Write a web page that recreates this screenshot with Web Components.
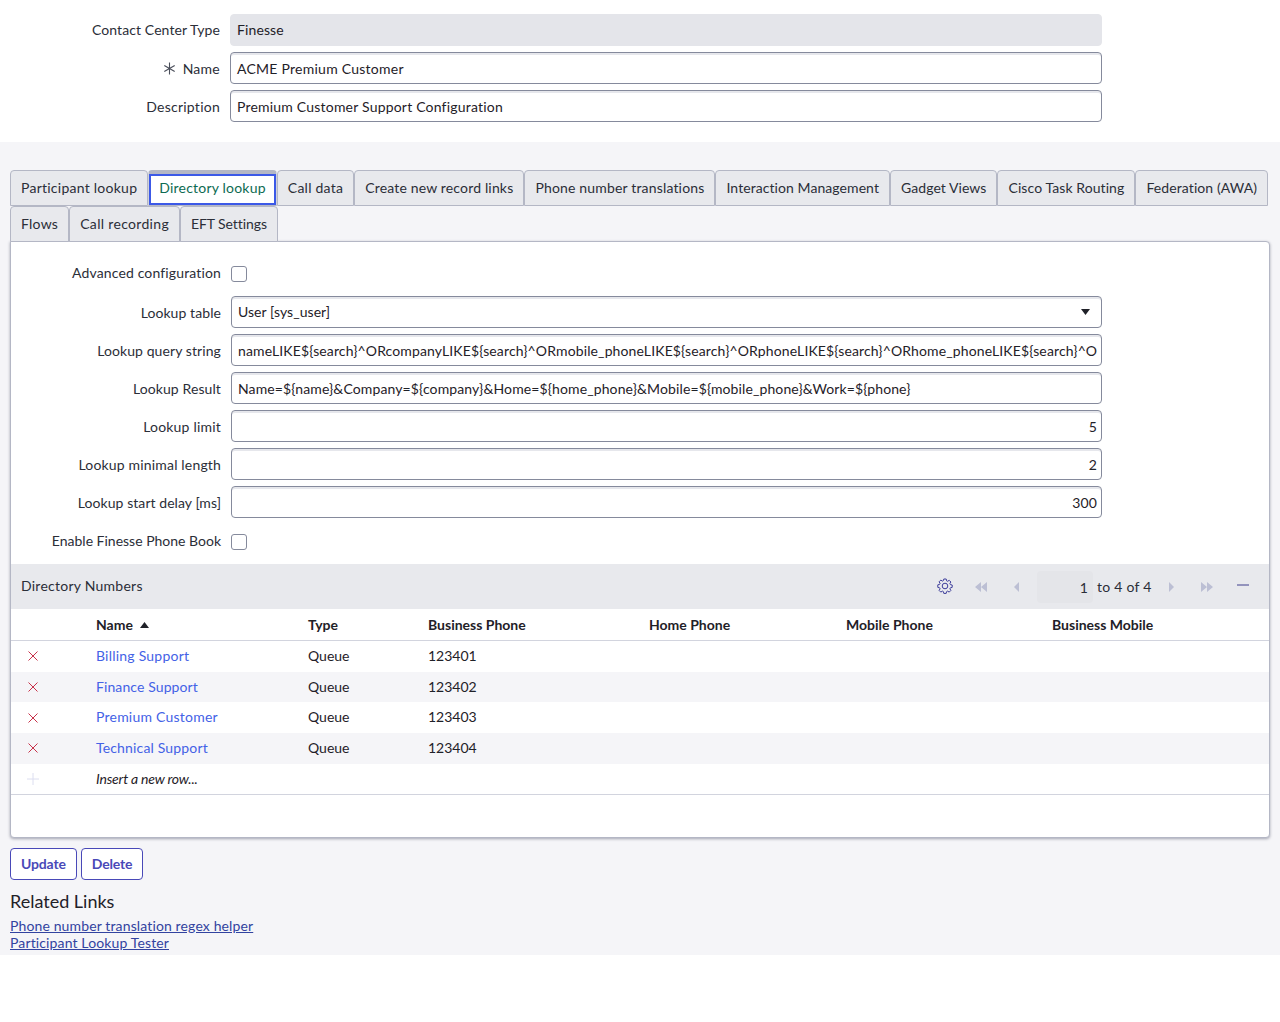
<!DOCTYPE html>
<html>
<head>
<meta charset="utf-8">
<title>Contact Center Configuration</title>
<style>
    html, body {
        margin: 0;
        background-color: white;
        font-family: Lato, "Liberation Sans", sans-serif;
        font-size: 14px;
        color: #1f2128;
    }
</style>
</head>
<body>
<cfg-page>
    <cfg-header>
        <cfg-field label="Contact Center Type" value="Finesse" readonly style="--label-ls:.09px;--value-ls:.12px;--label-top:0;--label-bottom:1px"></cfg-field>
        <cfg-field label="Name" value="ACME Premium Customer" required style="--label-ls:.25px;--value-ls:.25px"></cfg-field>
        <cfg-field label="Description" value="Premium Customer Support Configuration" style="--label-ls:.25px;--value-ls:.2px"></cfg-field>
    </cfg-header>
    <cfg-tabs>
        <cfg-tab>Participant lookup</cfg-tab><cfg-tab selected style="letter-spacing:.21px">Directory lookup</cfg-tab><cfg-tab>Call data</cfg-tab><cfg-tab style="letter-spacing:.165px">Create new record links</cfg-tab><cfg-tab style="letter-spacing:.17px">Phone number translations</cfg-tab><cfg-tab style="letter-spacing:.07px">Interaction Management</cfg-tab><cfg-tab style="letter-spacing:.06px">Gadget Views</cfg-tab><cfg-tab style="letter-spacing:.085px">Cisco Task Routing</cfg-tab><cfg-tab style="letter-spacing:.1px">Federation (AWA)</cfg-tab><cfg-tab>Flows</cfg-tab><cfg-tab style="letter-spacing:.32px">Call recording</cfg-tab><cfg-tab style="letter-spacing:-.08px">EFT Settings</cfg-tab>
    </cfg-tabs>
    <cfg-panel>
        <cfg-field inset label="Advanced configuration" type="checkbox" style="--label-ls:.14px;--label-top:0;--label-bottom:3px"></cfg-field>
        <cfg-field inset label="Lookup table" value="User [sys_user]" type="select" style="--label-ls:.08px;--value-ls:.05px;--value-top:0;--value-bottom:1px"></cfg-field>
        <cfg-field inset label="Lookup query string" value="nameLIKE${search}^ORcompanyLIKE${search}^ORmobile_phoneLIKE${search}^ORphoneLIKE${search}^ORhome_phoneLIKE${search}^O" style="--label-ls:.09px;--value-ls:.125px"></cfg-field>
        <cfg-field inset label="Lookup Result" value="Name=${name}&amp;Company=${company}&amp;Home=${home_phone}&amp;Mobile=${mobile_phone}&amp;Work=${phone}" style="--label-ls:.1px;--value-ls:.115px"></cfg-field>
        <cfg-field inset label="Lookup limit" value="5" type="number" style="--label-ls:.2px"></cfg-field>
        <cfg-field inset label="Lookup minimal length" value="2" type="number" style="--label-ls:.17px"></cfg-field>
        <cfg-field inset label="Lookup start delay [ms]" value="300" type="number" style="--label-ls:.06px"></cfg-field>
        <cfg-field inset label="Enable Finesse Phone Book" type="checkbox" style="--label-ls:0;--check-top:4px"></cfg-field>
        <cfg-list title="Directory Numbers">
            <cfg-list-row name="Billing Support" phone="123401"></cfg-list-row>
            <cfg-list-row name="Finance Support" phone="123402" striped style="--link-ls:.1px"></cfg-list-row>
            <cfg-list-row name="Premium Customer" phone="123403"></cfg-list-row>
            <cfg-list-row name="Technical Support" phone="123404" striped style="--link-ls:.16px"></cfg-list-row>
        </cfg-list>
    </cfg-panel>
    <cfg-actions>
        <cfg-button>Update</cfg-button>
        <cfg-button>Delete</cfg-button>
    </cfg-actions>
    <cfg-related>
        <a href="#">Phone number translation regex helper</a>
        <a href="#">Participant Lookup Tester</a>
    </cfg-related>
</cfg-page>

<script>
function defineSimple(name, css, html) {
    customElements.define(name, class extends HTMLElement {
        constructor() {
            super();
            this.attachShadow({ mode: 'open' });
            this.shadowRoot.innerHTML = `<style>${css}</style>${html}`;
        }
    });
}

defineSimple('cfg-page', `
    :host {
        display: block;
        height: 955px;
        background-color: #f5f5f8;
    }
`, `<slot></slot>`);

defineSimple('cfg-header', `
    :host {
        display: flex;
        flex-direction: column;
        gap: 6px;
        height: 142px;
        box-sizing: border-box;
        padding-top: 14px;
        background-color: white;
    }
`, `<slot></slot>`);

defineSimple('cfg-tabs', `
    :host {
        display: flex;
        flex-wrap: wrap;
        padding: 28px 0 0 10px;
        margin-bottom: -1px;
        position: relative;
        z-index: 1;
    }
`, `<slot></slot>`);

class CfgTab extends HTMLElement {
    constructor() {
        super();
        this.attachShadow({ mode: 'open' });
        this.shadowRoot.innerHTML = `
            <style>
                :host {
                    display: block;
                    height: 36px;
                    box-sizing: border-box;
                    padding: 0 10px;
                    line-height: 34px;
                    background-color: #e8e9ed;
                    color: #2b2e38;
                    border: 1px solid #b4b7c5;
                    border-radius: 4px 4px 0 0;
                    white-space: nowrap;
                    letter-spacing: .25px;
                }
                :host([selected]) {
                    background-color: white;
                    color: #0d6b52;
                    border-top-width: 4px;
                    border-left-color: #d0d2db;
                    border-right-color: #d0d2db;
                    line-height: 28px;
                    box-shadow: inset 0 0 0 2px #3c59e7;
                }
            </style>
            <slot></slot>`;
    }
}
customElements.define('cfg-tab', CfgTab);

defineSimple('cfg-panel', `
    :host {
        display: flex;
        flex-direction: column;
        gap: 6px;
        margin: 0 10px;
        height: 597px;
        box-sizing: border-box;
        padding-top: 16px;
        background-color: white;
        border: 1px solid #b4b7c5;
        border-radius: 0 4px 4px 4px;
        box-shadow: 0 1px 3px rgba(40, 45, 70, 0.4);
    }
`, `<slot></slot>`);

class CfgField extends HTMLElement {
    connectedCallback() {
        const type = this.getAttribute('type') || 'text';
        const value = this.getAttribute('value') || '';
        const isCheck = type === 'checkbox';
        const star = this.hasAttribute('required')
            ? `<svg class="star" width="13" height="13" viewBox="0 0 13 13"><path d="M6.5 0.5v12M1.3 3.5l10.4 6M1.3 9.5l10.4-6" stroke="#4a4e5a" stroke-width="1.1" fill="none"/></svg>`
            : '';
        const arrow = type === 'select'
            ? `<svg class="arrow" width="9" height="6" viewBox="0 0 9 6"><path d="M0 0h9L4.500 6z" fill="#1f2128"/></svg>`
            : '';
        const control = isCheck
            ? `<div class="check"></div>`
            : `<div class="box ${type}"><span></span>${arrow}</div>`;
        this.attachShadow({ mode: 'open' });
        this.shadowRoot.innerHTML = `
            <style>
                :host {
                    display: grid;
                    grid-template-columns: 220px 872px;
                    column-gap: 10px;
                    align-items: center;
                    height: 32px;
                    color: #2b2e38;
                }
                :host([inset]) { grid-template-columns: 210px 871px; }
                .label {
                    display: flex;
                    justify-content: flex-end;
                    align-items: center;
                    gap: 7px;
                    white-space: nowrap;
                    padding-top: var(--label-top, 1px);
                    padding-bottom: var(--label-bottom, 0);
                    letter-spacing: var(--label-ls, .1px);
                }
                .box {
                    height: 32px;
                    box-sizing: border-box;
                    display: flex;
                    align-items: center;
                    justify-content: space-between;
                    padding: 0 4px 0 6px;
                    background-color: white;
                    color: #1f2128;
                    border: 1px solid #858a9c;
                    border-radius: 4px;
                    box-shadow: inset 0 2px 0 #e6e7ec;
                    white-space: nowrap;
                    overflow: hidden;
                    letter-spacing: var(--value-ls, .1px);
                }
                .box span {
                    padding-top: var(--value-top, 1px);
                    padding-bottom: var(--value-bottom, 0);
                }
                .number { justify-content: flex-end; }
                .select { padding-right: 11px; }
                .arrow { flex: none; }
                :host([readonly]) .box {
                    background-color: #e4e5ea;
                    border-color: #e4e5ea;
                    box-shadow: none;
                }
                :host([readonly]) .box span { padding: 0 0 2px; }
                .check {
                    width: 16px;
                    height: 16px;
                    box-sizing: border-box;
                    background-color: white;
                    border: 1px solid #858a9c;
                    border-radius: 3px;
                    margin-top: var(--check-top, 0);
                }
            </style>
            <div class="label">${star}<span></span></div>
            ${control}`;
        this.shadowRoot.querySelector('.label span').textContent = this.getAttribute('label');
        if (!isCheck) {
            this.shadowRoot.querySelector('.box span').textContent = value;
        }
    }
}
customElements.define('cfg-field', CfgField);

const LIST_COLUMNS = 'grid-template-columns: 85px 212px 120px 221px 197px 206px 1fr;';

class CfgList extends HTMLElement {
    connectedCallback() {
        this.attachShadow({ mode: 'open' });
        this.shadowRoot.innerHTML = `
            <style>
                :host {
                    display: block;
                    margin-top: 2px;
                    color: #2b2e38;
                }
                .bar {
                    display: flex;
                    align-items: center;
                    height: 45px;
                    padding: 0 20px 0 10px;
                    background-color: #e8e9ed;
                    letter-spacing: .25px;
                }
                .title { flex: 1; padding-bottom: 2px; }
                .tools { display: flex; align-items: center; }
                .tools svg { display: block; flex: none; }
                .page {
                    width: 56px;
                    height: 32px;
                    margin: 0 4px 0 18px;
                    box-sizing: border-box;
                    padding: 2px 5px 0 0;
                    line-height: 30px;
                    text-align: right;
                    background-color: #e4e5e9;
                    border-radius: 4px;
                }
                .of { width: 54px; margin-right: 18px; white-space: nowrap; padding-bottom: 1px; }
                .head {
                    display: grid;
                    ${LIST_COLUMNS}
                    align-items: center;
                    height: 32px;
                    box-sizing: border-box;
                    border-bottom: 1px solid #d2d4de;
                    background-color: white;
                    font-weight: 700;
                    color: #1f2128;
                    letter-spacing: 0;
                }
                .sort { display: flex; align-items: center; gap: 7px; }
                .insert {
                    display: grid;
                    ${LIST_COLUMNS}
                    align-items: center;
                    height: 31px;
                    box-sizing: border-box;
                    border-bottom: 1px solid #d2d4de;
                    font-style: italic;
                    color: #1f2128;
                    letter-spacing: -.2px;
                }
                .plus { display: block; margin-left: 16px; }
            </style>
            <div class="bar">
                <div class="title"></div>
                <div class="tools">
                    <svg width="16" height="16" viewBox="0 0 16 16" fill="none" stroke="#3f3f9c" stroke-width="1" style="margin:-1px 22px 0 0">
                        <path d="M6.800 1h2.400l.4 1.800 1 .5 1.600-1 1.700 1.700-1 1.600.5 1 1.800.4v2.400l-1.800.4-.5 1 1 1.600-1.700 1.700-1.600-1-1 .5-.4 1.800H6.800l-.4-1.800-1-.5-1.600 1-1.700-1.700 1-1.600-.5-1-1.800-.4V6.800l1.800-.4.5-1-1-1.600 1.700-1.700 1.600 1 1-.5z"/>
                        <circle cx="8" cy="8" r="2.800"/>
                    </svg>
                    <svg width="12" height="10" viewBox="0 0 12 10" fill="#bcbfd4"><path d="M6 0v10L0 5zM12 0v10L6 5z"/></svg>
                    <svg width="5" height="10" viewBox="0 0 5 10" fill="#bcbfd4" style="margin-left:27px"><path d="M5 0v10L0 5z"/></svg>
                    <div class="page">1</div>
                    <div class="of">to 4 of 4</div>
                    <svg width="5" height="10" viewBox="0 0 5 10" fill="#bcbfd4"><path d="M0 0v10L5 5z"/></svg>
                    <svg width="12" height="10" viewBox="0 0 12 10" fill="#bcbfd4" style="margin-left:27px"><path d="M0 0v10L6 5zM6 0v10L12 5z"/></svg>
                    <svg width="12" height="2" viewBox="0 0 12 2" style="margin:-3px 0 0 24px"><path d="M0 1h12" stroke="#3f3f8c" stroke-width="1"/></svg>
                </div>
            </div>
            <div class="head">
                <div></div>
                <div class="sort"><span>Name</span><svg width="9" height="6" viewBox="0 0 9 6"><path d="M0 6h9L4.500 0z" fill="#1f2128"/></svg></div>
                <div>Type</div>
                <div>Business Phone</div>
                <div>Home Phone</div>
                <div>Mobile Phone</div>
                <div>Business Mobile</div>
            </div>
            <slot></slot>
            <div class="insert">
                <svg class="plus" width="12" height="12" viewBox="0 0 12 12"><path d="M6 0v12M0 6h12" stroke="#dcdef0" stroke-width="1"/></svg>
                <div>Insert a new row...</div>
            </div>`;
        this.shadowRoot.querySelector('.title').textContent = this.getAttribute('title');
    }
}
customElements.define('cfg-list', CfgList);

class CfgListRow extends HTMLElement {
    connectedCallback() {
        this.attachShadow({ mode: 'open' });
        this.shadowRoot.innerHTML = `
            <style>
                :host {
                    display: grid;
                    ${LIST_COLUMNS}
                    align-items: center;
                    height: 30.7px;
                    box-sizing: border-box;
                    padding-bottom: 2px;
                    background-color: white;
                    color: #1f2128;
                }
                :host([striped]) { background-color: #f5f5f8; }
                .del { display: block; margin: 2px 0 0 17px; }
                a { color: #4462e6; text-decoration: none; letter-spacing: var(--link-ls, .22px); }
            </style>
            <svg class="del" width="10" height="10" viewBox="0 0 10 10"><path d="M.5.500l9 9M9.500.500l-9 9" stroke="#c8324a" stroke-width="1"/></svg>
            <div><a href="#">${this.getAttribute('name')}</a></div>
            <div>Queue</div>
            <div>${this.getAttribute('phone')}</div>
            <div></div><div></div><div></div>`;
    }
}
customElements.define('cfg-list-row', CfgListRow);

defineSimple('cfg-actions', `
    :host {
        display: flex;
        gap: 4px;
        padding: 10px 0 0 10px;
    }
`, `<slot></slot>`);

defineSimple('cfg-button', `
    :host {
        display: block;
        height: 32px;
        box-sizing: border-box;
        padding: 0 10px;
        line-height: 30px;
        font-weight: 700;
        color: #4949b8;
        background-color: white;
        border: 1px solid #4949b8;
        border-radius: 4px;
        letter-spacing: -.15px;
    }
`, `<slot></slot>`);

defineSimple('cfg-related', `
    :host {
        display: block;
        padding: 8px 0 0 10px;
    }
    h2 {
        margin: 0 0 3px;
        font-size: 18px;
        line-height: 26px;
        font-weight: 400;
        color: #1f2128;
    }
    ::slotted(a) {
        display: block;
        line-height: 17px;
        width: max-content;
        color: #3243a0;
        letter-spacing: .13px;
    }
`, `<h2>Related Links</h2><slot></slot>`);
</script>
</body>
</html>
